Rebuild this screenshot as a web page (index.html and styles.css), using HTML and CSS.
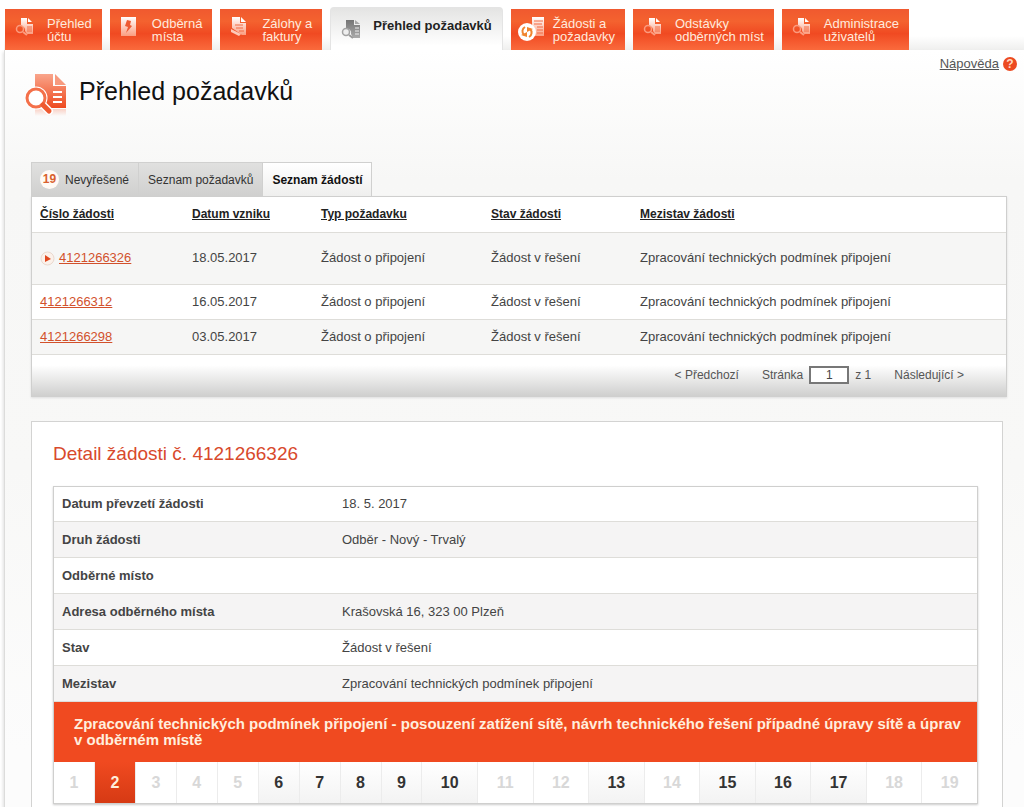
FILE: index.html
```
<!DOCTYPE html>
<html lang="cs">
<head>
<meta charset="utf-8">
<title>Přehled požadavků</title>
<link rel="stylesheet" href="styles.css">
</head>
<body>
<svg class="sprite" aria-hidden="true">
  <defs>
    <linearGradient id="fadeWhite" x1="0" y1="0" x2="0" y2="1">
      <stop offset="0" stop-color="#fff"/><stop offset="1" stop-color="#fb9d80"/>
    </linearGradient>
    <linearGradient id="fadeGrey" x1="0" y1="0" x2="0" y2="1">
      <stop offset="0" stop-color="#757575"/><stop offset="1" stop-color="#aaa"/>
    </linearGradient>
    <linearGradient id="fadeOrange" x1="0" y1="0" x2="0" y2="1">
      <stop offset="0" stop-color="#f9a58b"/><stop offset="1" stop-color="#ee4a1f"/>
    </linearGradient>
    <linearGradient id="reflection" x1="0" y1="0" x2="0" y2="1">
      <stop offset="0" stop-color="#f4704a" stop-opacity="0.300"/><stop offset="1" stop-color="#f4704a" stop-opacity="0"/>
    </linearGradient>
    <symbol id="doc-search" viewBox="0 0 20 20">
      <path fill="url(#fadeWhite)" d="M6 1h6v6h6v10h-6l-2-3a4 4 0 0 0-4-5z"/>
      <path fill="#fff" d="M13 1l4 4h-4z"/>
      <path stroke="#f26a42" stroke-width="1" d="M12 10h5M12 12h5M12 14h5"/>
      <circle cx="5" cy="12" r="3.500" fill="none" stroke="#fb9b7e" stroke-width="1.500"/>
      <path stroke="#fb9b7e" stroke-width="2" d="M8 15l4 3"/>
    </symbol>
    <symbol id="doc-search-grey" viewBox="0 0 20 20">
      <path fill="url(#fadeGrey)" d="M5 1h8v5h6v13h-7l-2-4a4 4 0 0 0-5-5z"/>
      <path fill="#a9a9a9" d="M14 1l5 4h-5z"/>
      <path stroke="#ededed" stroke-width="1" d="M14 9h4M14 12h4M14 15h4"/>
      <circle cx="5" cy="13" r="3.500" fill="#eee" stroke="#a3a3a3" stroke-width="1.500"/>
      <path stroke="#999" stroke-width="2" d="M8 16l4 3"/>
    </symbol>
  </defs>
</svg>

<nav class="main-nav" aria-label="Hlavní nabídka">
  <a class="nav-tab" href="#"><svg class="nav-icon" viewBox="0 0 20 20"><use href="#doc-search"/></svg><span>Přehled<br>účtu</span></a>
  <a class="nav-tab" href="#"><svg class="nav-icon" viewBox="0 0 20 20"><path fill="url(#fadeWhite)" d="M1 0h15v19H1z"/><path fill="#ee5a32" d="M7 3l4 1-1 4 2 1-6 7 2-6-3-1z"/></svg><span>Odběrná<br>místa</span></a>
  <a class="nav-tab" href="#"><svg class="nav-icon" viewBox="0 0 20 20"><path fill="url(#fadeWhite)" d="M2 0h8v6h6v12h-4L2 11z"/><path fill="#fff" d="M11 0l5 5h-5z"/><path fill="#fdc9b8" d="M1 12l10 5-2 2-8-4z"/><path stroke="#f26a42" d="M5 8h8M6 11h7M9 14h5"/></svg><span>Zálohy a<br>faktury</span></a>
  <a class="nav-tab nav-tab-active" href="#" aria-current="page"><svg class="nav-icon" viewBox="0 0 20 20"><use href="#doc-search-grey"/></svg><span>Přehled požadavků</span></a>
  <a class="nav-tab nav-tab-wide-icon" href="#"><svg class="nav-icon nav-icon-wide" viewBox="0 0 28 26"><path fill="url(#fadeWhite)" d="M15 0h12v19H15z"/><path stroke="#f26a42" d="M17 4h9M17 7h8M20 10h6M20 13h6M20 16h6"/><circle cx="10" cy="15" r="9" fill="#fff"/><path fill="none" stroke="#f0852f" stroke-width="2" d="M8 10a5 5 0 0 0-1 8M12 20a5 5 0 0 0 1-8"/><path fill="#f0852f" d="M4 18l6 2V15zM16 12l-6-2v5z"/></svg><span>Žádosti a<br>požadavky</span></a>
  <a class="nav-tab" href="#"><svg class="nav-icon" viewBox="0 0 20 20"><use href="#doc-search"/></svg><span>Odstávky<br>odběrných míst</span></a>
  <a class="nav-tab" href="#"><svg class="nav-icon" viewBox="0 0 20 20"><use href="#doc-search"/></svg><span>Administrace<br>uživatelů</span></a>
</nav>

<main class="page">
  <div class="help-row">
    <a class="help-link" href="#">Nápověda</a>
    <span class="help-badge" aria-hidden="true">?</span>
  </div>
  <header class="page-head">
    <svg class="page-icon" viewBox="0 0 44 44" aria-hidden="true">
      <path fill="url(#reflection)" d="M11 37h31v7H11z"/>
      <path fill="url(#fadeOrange)" d="M11 2h18v12h13v22H11z"/>
      <path fill="#f79a7e" d="M31 2l11 11H31z"/>
      <path stroke="#fff" stroke-width="2" d="M29 20h9M29 25h9M29 30h9"/>
      <circle cx="12" cy="26" r="9" fill="#fff" stroke="#fff" stroke-width="5"/>
      <path stroke="#fff" stroke-width="8" stroke-linecap="round" d="M19 33l6 6"/>
      <circle cx="12" cy="26" r="9" fill="#fff" stroke="#f4704a" stroke-width="3"/>
      <path stroke="#ee5a30" stroke-width="5" stroke-linecap="round" d="M19 33l6 6"/>
    </svg>
    <h1 class="page-title">Přehled požadavků</h1>
  </header>

  <section class="requests">
    <div class="tabs" role="tablist">
      <button class="tab" type="button" role="tab"><span class="count">19</span>Nevyřešené</button>
      <button class="tab" type="button" role="tab">Seznam požadavků</button>
      <button class="tab tab-active" type="button" role="tab" aria-selected="true">Seznam žádostí</button>
    </div>
    <div class="panel">
      <table class="list">
        <colgroup><col class="col-id"><col class="col-date"><col class="col-type"><col class="col-state"><col></colgroup>
        <thead>
          <tr><th><a href="#">Číslo žádosti</a></th><th><a href="#">Datum vzniku</a></th><th><a href="#">Typ požadavku</a></th><th><a href="#">Stav žádosti</a></th><th><a href="#">Mezistav žádosti</a></th></tr>
        </thead>
        <tbody>
          <tr class="row-selected"><td><svg class="marker" viewBox="0 0 15 15" aria-hidden="true"><circle cx="7.500" cy="7.500" r="6.500" fill="#fbf1ea" stroke="#ead9cf"/><path fill="#e0481f" d="M5 4l6 4-6 3z"/></svg><a class="id-link" href="#">4121266326</a></td><td>18.05.2017</td><td>Žádost o připojení</td><td>Žádost v řešení</td><td>Zpracování technických podmínek připojení</td></tr>
          <tr><td><a class="id-link" href="#">4121266312</a></td><td>16.05.2017</td><td>Žádost o připojení</td><td>Žádost v řešení</td><td>Zpracování technických podmínek připojení</td></tr>
          <tr><td><a class="id-link" href="#">4121266298</a></td><td>03.05.2017</td><td>Žádost o připojení</td><td>Žádost v řešení</td><td>Zpracování technických podmínek připojení</td></tr>
        </tbody>
      </table>
      <div class="pager">
        <a class="pager-link" href="#">&lt; Předchozí</a>
        <div class="pager-page"><label for="page-no">Stránka</label><input class="page-input" id="page-no" type="text" value="1"><span>z 1</span></div>
        <a class="pager-link" href="#">Následující &gt;</a>
      </div>
    </div>
  </section>

  <section class="detail">
    <h2 class="detail-title">Detail žádosti č. 4121266326</h2>
    <div class="detail-box">
      <table class="facts">
        <tbody>
          <tr><th scope="row">Datum převzetí žádosti</th><td>18. 5. 2017</td></tr>
          <tr><th scope="row">Druh žádosti</th><td>Odběr - Nový - Trvalý</td></tr>
          <tr><th scope="row">Odběrné místo</th><td></td></tr>
          <tr><th scope="row">Adresa odběrného místa</th><td>Krašovská 16, 323 00 Plzeň</td></tr>
          <tr><th scope="row">Stav</th><td>Žádost v řešení</td></tr>
          <tr><th scope="row">Mezistav</th><td>Zpracování technických podmínek připojení</td></tr>
        </tbody>
      </table>
      <p class="banner">Zpracování technických podmínek připojení - posouzení zatížení sítě, návrh technického řešení případné úpravy sítě a úprav v&nbsp;odběrném místě</p>
      <ol class="steps">
        <li class="step">1</li>
        <li class="step step-current" aria-current="step">2</li>
        <li class="step">3</li>
        <li class="step">4</li>
        <li class="step">5</li>
        <li class="step step-open">6</li>
        <li class="step step-open">7</li>
        <li class="step step-open">8</li>
        <li class="step step-open">9</li>
        <li class="step step-wide step-open">10</li>
        <li class="step step-wide">11</li>
        <li class="step step-wide">12</li>
        <li class="step step-wide step-open">13</li>
        <li class="step step-wide">14</li>
        <li class="step step-wide step-open">15</li>
        <li class="step step-wide step-open">16</li>
        <li class="step step-wide step-open">17</li>
        <li class="step step-wide">18</li>
        <li class="step step-wide">19</li>
      </ol>
    </div>
  </section>
</main>
</body>
</html>
```
FILE: styles.css
```
* { box-sizing: border-box; }
body {
  margin: 0;
  padding-left: 4px;
  background: #fff;
  color: #444;
  font: 13px/16px "Liberation Sans", Arial, sans-serif;
}
.sprite { position: absolute; width: 0; height: 0; }

.main-nav {
  display: flex;
  align-items: flex-end;
  gap: 8px;
  height: 50px;
  padding-left: 1px;
  background: linear-gradient(#fff 36px, #efefee);
}
.nav-tab {
  display: flex;
  align-items: flex-start;
  gap: 12px;
  height: 41px;
  padding: 8px 10px 0;
  background: linear-gradient(#f0592f, #f4622f 30%, #f04a22 60%, #fa6a3c);
  color: #ffeadd;
  line-height: 13px;
  text-decoration: none;
  white-space: nowrap;
}
.nav-icon { flex: none; width: 20px; height: 20px; }
.nav-tab-wide-icon { gap: 8px; padding-left: 6px; }
.nav-icon-wide { width: 28px; height: 26px; }
.nav-tab-active {
  height: 43px;
  padding-top: 11px;
  border: 1px solid #e4e4e4;
  border-bottom: 0;
  border-radius: 4px 4px 0 0;
  background: linear-gradient(#e4e4e3, #fff 90%);
  color: #222;
  font-weight: bold;
}

.page {
  padding: 6px 17px 4px 26px;
  border-left: 1px solid #dcdcdb;
  background: linear-gradient(#fff, #f7f7f6 130px, #f8f8f7 420px, #fcfcfc 700px);
  box-shadow: -1px 2px 3px #e0e0e0;
}
.help-row {
  display: flex;
  justify-content: flex-end;
  align-items: center;
  gap: 4px;
  margin-right: -10px;
}
.help-link { color: #555; }
.help-badge {
  width: 14px;
  height: 14px;
  border-radius: 50%;
  background: #ec4a20;
  color: #ffd9c0;
  font-size: 12px;
  font-weight: bold;
  line-height: 14px;
  text-align: center;
}
.page-head {
  display: flex;
  align-items: center;
  gap: 11px;
  margin: 0 0 46px -7px;
}
.page-icon { width: 44px; height: 44px; }
.page-title { margin: 0 0 6px; color: #111; font-size: 25px; font-weight: normal; line-height: 32px; }

.tabs { display: flex; }
.tab {
  display: flex;
  align-items: center;
  height: 34px;
  padding: 0 9px;
  border: 1px solid #d0d0cf;
  border-width: 1px 1px 0 0;
  background: linear-gradient(#e0e0df, #d0d0cf);
  color: #333;
  font: 12px/16px "Liberation Sans", Arial, sans-serif;
}
.tab:first-child { border-left-width: 1px; padding-left: 8px; }
.tab-active { background: linear-gradient(#fff, #efefee); color: #111; font-weight: bold; }
.count {
  width: 19px;
  height: 19px;
  margin-right: 6px;
  border-radius: 50%;
  background: #fffaf5;
  color: #d9612f;
  font-weight: bold;
  line-height: 19px;
  text-align: center;
}
.panel { border: 1px solid #cfcfce; background: #fff; box-shadow: 0 1px 2px #ddd; }
.list, .facts { width: 100%; border-collapse: collapse; table-layout: fixed; }
.list th, .list td { height: 35px; padding: 0 8px; border-bottom: 1px solid #deddd9; text-align: left; }
.list th { color: #222; font-size: 12px; }
.list th a { color: inherit; }
.col-id { width: 152px; }
.col-date { width: 129px; }
.col-type { width: 170px; }
.col-state { width: 149px; }
.list .row-selected td { height: 52px; }
.list tbody tr:nth-child(odd) { background: #f6f6f5; }
.marker { width: 15px; height: 15px; margin-right: 4px; vertical-align: middle; }
.id-link { color: #d2512c; }
.pager {
  display: flex;
  justify-content: flex-end;
  align-items: center;
  gap: 23px;
  height: 41px;
  padding-right: 42px;
  background: linear-gradient(#fff 25%, #cfcfce);
  color: #555;
  font-size: 12px;
}
.pager-link { color: inherit; text-decoration: none; }
.pager-page { display: flex; align-items: center; gap: 6px; }
.page-input {
  width: 40px;
  height: 18px;
  padding: 0;
  border: 2px solid #777;
  background: #fff;
  color: #444;
  font: 12px/14px "Liberation Sans", Arial, sans-serif;
  text-align: center;
}

.detail {
  margin: 24px 4px 0 0;
  padding: 20px 24px 4px 21px;
  border: 1px solid #d3d3d2;
  border-bottom: 0;
  background: #fff;
}
.detail-title { margin: 0 0 20px; color: #d8492c; font-size: 19px; font-weight: normal; line-height: 24px; }
.detail-box { border: 1px solid #cfcfce; box-shadow: 0 1px 2px #ccc; }
.facts th, .facts td { height: 36px; padding: 0 8px; border-bottom: 1px solid #deddd9; text-align: left; }
.facts tr:first-child th, .facts tr:first-child td { height: 35px; }
.facts th { width: 280px; }
.facts tr:nth-child(even) { background: #f5f4f4; }
.banner {
  margin: 0;
  padding: 14px 10px 14px 20px;
  background: #f04a20;
  color: #ffeedd;
  font-size: 15px;
  font-weight: bold;
  line-height: 16px;
}
.steps { display: flex; margin: 0; padding: 0; list-style: none; }
.step {
  flex: 41 1 0;
  height: 41px;
  border-right: 1px solid #ececec;
  color: #d8d8d8;
  font-size: 16px;
  font-weight: bold;
  line-height: 41px;
  text-align: center;
}
.step-wide { flex-grow: 56; }
.step:last-child { border-right: 0; }
.step-open { background: linear-gradient(#fff, #f3f3f3); color: #333; }
.step-current { background: linear-gradient(#f04a20, #d63a14); color: #ffeedd; }
```
